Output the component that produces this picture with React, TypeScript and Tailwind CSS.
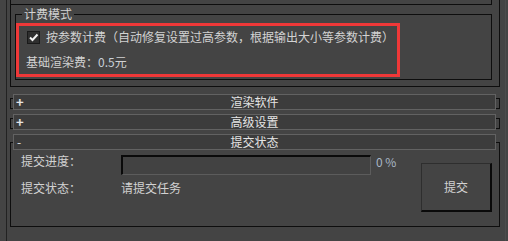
import React from 'react';

const line = 'border-[#0e0e0e]';

const RolloutHeader: React.FC<{ title: string; open?: boolean; pull: string }> = ({ title, open, pull }) => (
  <div
    className={`${pull} ml-[2px] mr-[3px] h-[16px] border border-[#626262] bg-[#3c3c3c] grid grid-cols-[1fr_auto_1fr] items-center text-[#e4e4e4]`}
  >
    <span className={`pl-[2px] leading-[14px] ${open ? 'text-[12px] pl-[3px]' : 'text-[13px] font-bold'}`}>
      {open ? '-' : '+'}
    </span>
    <span className="leading-[14px]">{title}</span>
    <span />
  </div>
);

const Collapsed: React.FC<{ title: string; gap: string }> = ({ title, gap }) => (
  <div className={`${gap} h-[11px] border ${line}`}>
    <RolloutHeader title={title} pull="-mt-[5px]" />
  </div>
);

export default function App() {
  return (
    <div className="w-[508px] h-[241px] overflow-hidden bg-[#444444] pl-[6px] text-[12px] leading-[16px] text-[#d2d2d2] font-['Noto_Sans_CJK_SC','Noto_Sans',sans-serif]">
      <div className="h-full flex border-l border-[#222222] pl-[3px]">
        <div className="w-[490px] shrink-0">
          {/* billing rollout (scrolled, only its bottom is visible) */}
          <div className={`h-[87px] border-x border-b ${line}`}>
            <div className={`h-[5px] mr-[7px] border-r border-b ${line}`} />
            <div className={`relative mt-[9px] ml-[4px] mr-[7px] pb-[2px] border ${line}`}>
              <span className="absolute -top-[9px] left-[6px] px-[2px] bg-[#444444]">计费模式</span>
              <div className="mt-[8px] w-[384px] h-[54px] border-[3px] border-[#ef3838]">
                <div className="mt-[1px] h-[20px] pl-[8px] flex items-center">
                  <span className="w-[13px] h-[13px] border border-[#1a1a1a] bg-[#2f2f2f] flex items-center justify-center">
                    <svg width="11" height="11" viewBox="0 0 11 11">
                      <path d="M2 5.5 L4.5 8 L9.5 2.5" fill="none" stroke="#f2f2f2" strokeWidth="2" />
                    </svg>
                  </span>
                  <span className="ml-[6px]">按参数计费（自动修复设置过高参数，根据输出大小等参数计费）</span>
                </div>
                <div className="mt-[5px] h-[20px] pl-[7px] flex items-center">
                  基础渲染费：<span className="text-[#c8d0d8]">0.5</span>元
                </div>
              </div>
            </div>
          </div>

          <Collapsed title="渲染软件" gap="mt-[11px]" />
          <Collapsed title="高级设置" gap="mt-[9px]" />

          {/* submit status rollout */}
          <div className={`mt-[13px] border ${line}`}>
            <RolloutHeader title="提交状态" open pull="-mt-[9px]" />
            <div className="h-[76px] flex pl-[10px]">
              <div className="pt-[3px]">
                <div className="flex items-start">
                  <span className="w-[100px]">提交进度：</span>
                  <div className="mt-[2px] w-[250px] h-[20px] border-t-2 border-l-2 border-t-[#0a0a0a] border-l-[#0a0a0a] border-b border-r border-b-[#5c5c5c] border-r-[#5c5c5c] bg-[#424242]" />
                  <span className="ml-[5px] mt-[1px] text-[#a9b7c6]">0 %</span>
                </div>
                <div className="mt-[3px] h-[20px] flex items-center">
                  <span className="w-[100px]">提交状态：</span>
                  <span>请提交任务</span>
                </div>
              </div>
              <button className="ml-auto mr-[7px] mt-[13px] w-[71px] h-[49px] border-t border-l border-t-[#2e2e2e] border-l-[#2e2e2e] border-b-2 border-r-2 border-b-[#0a0a0a] border-r-[#0a0a0a] flex items-center justify-center text-[#d2d2d2]">
                提交
              </button>
            </div>
          </div>
        </div>
        <div className="ml-[5px] h-full border-l border-[#4c4c4c]" />
      </div>
    </div>
  );
}
